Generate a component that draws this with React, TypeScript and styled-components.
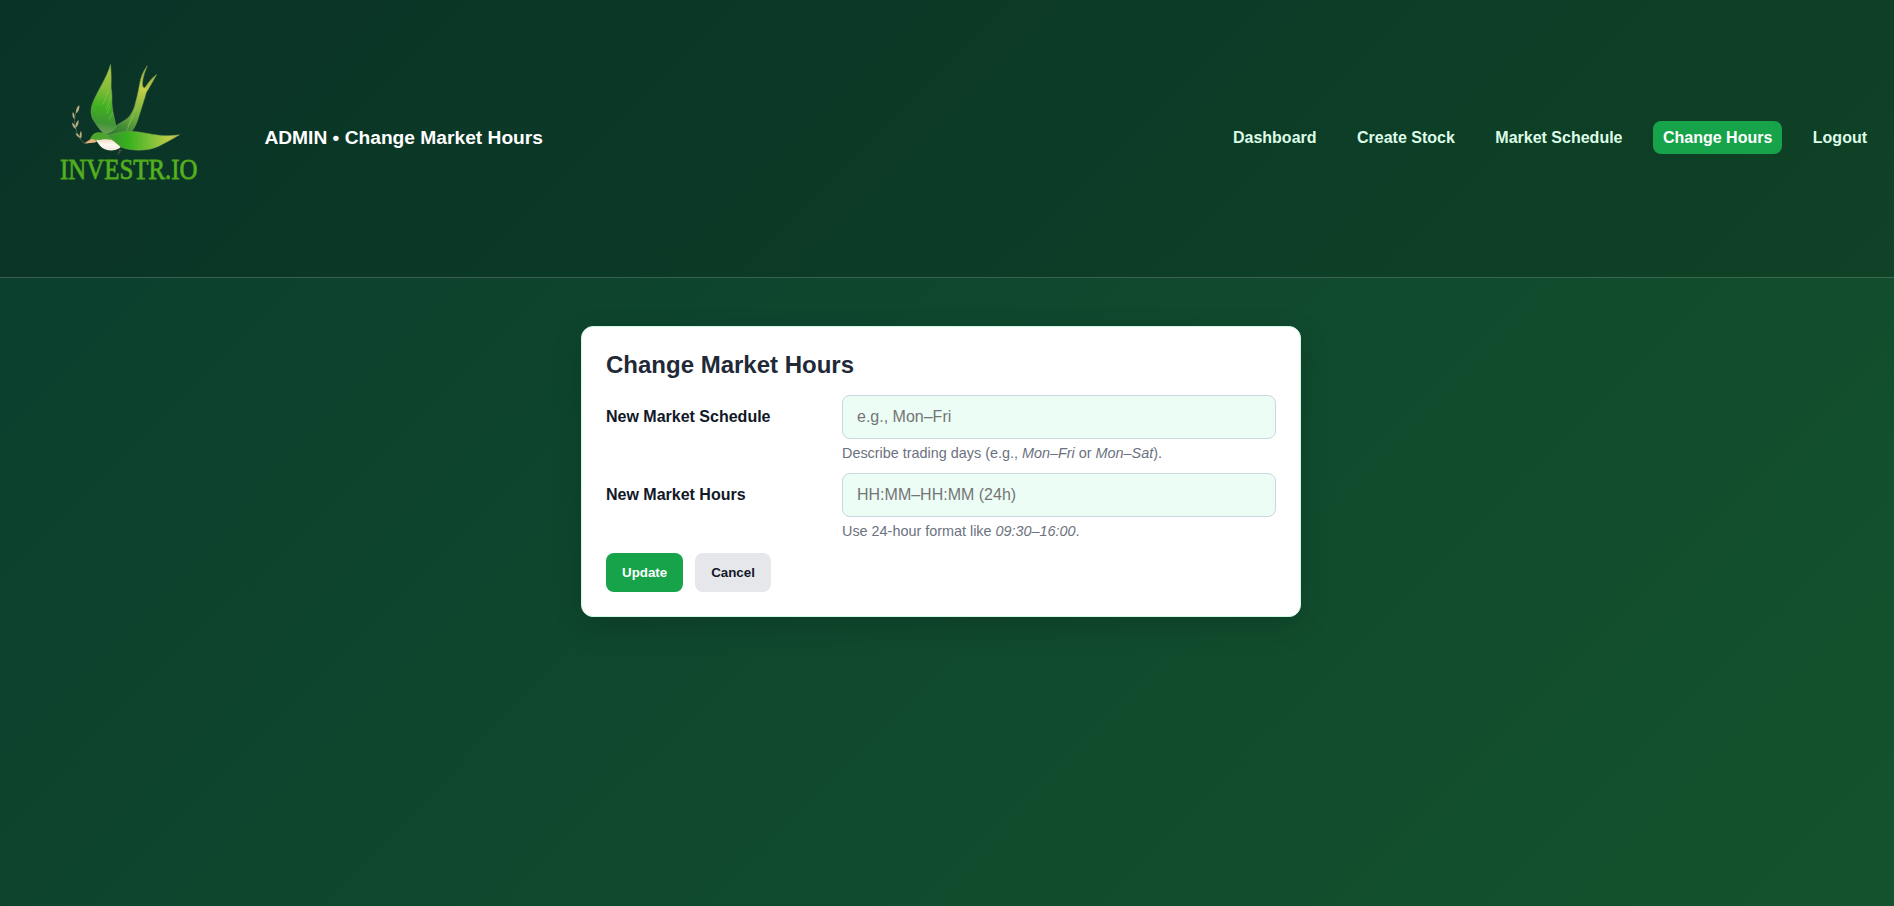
import React from "react";
import styled, { createGlobalStyle, css } from "styled-components";

const GlobalStyle = createGlobalStyle`
  * { box-sizing: border-box; }
  body {
    margin: 0;
    min-height: 100vh;
    font-family: Arial, "Liberation Sans", sans-serif;
    color: #111827;
    background: linear-gradient(135deg, #0b3d2e, #14532d);
  }
`;

const Header = styled.header`
  display: flex;
  align-items: center;
  height: 278px;
  padding: 0 17.4px 2px 0;
  background: rgba(0, 0, 0, 0.15);
  border-bottom: 1px solid rgba(255, 255, 255, 0.2);
`;

const Logo = styled.svg`
  flex: none;
  width: 250px;
  height: 250px;
  margin-right: 14.4px;
`;

const PageName = styled.div`
  color: #fff;
  font-size: 19.2px;
  font-weight: 700;
`;

const Nav = styled.nav`
  display: flex;
  gap: 21.3px;
  margin-left: auto;
`;

const NavLink = styled.a<{ $active?: boolean }>`
  padding: 8px 9.6px 7px;
  border-radius: 8px;
  color: #dcfce7;
  font-size: 16px;
  line-height: 18px;
  font-weight: 700;
  text-decoration: none;
  ${(p) => p.$active && css`
    background: #16a34a;
    color: #fff;
  `}
`;

const Main = styled.main`
  display: flex;
  justify-content: center;
  padding: 48px 12px 0 0;
`;

const Card = styled.form`
  width: 720px;
  padding: 24px;
  background: #fff;
  border: 1px solid #d1fae5;
  border-radius: 12px;
  box-shadow: 0 10px 30px rgba(0, 0, 0, 0.15);
`;

const Title = styled.h2`
  margin: 0 0 16px;
  color: #1f2937;
  font-size: 24px;
  line-height: 28px;
`;

const Row = styled.div`
  display: grid;
  grid-template-columns: 220px 1fr;
  gap: 16px;
  margin-bottom: 12px;
`;

const Label = styled.label`
  padding-top: 13px;
  font-size: 16px;
  line-height: 18px;
  font-weight: 700;
`;

const Input = styled.input`
  display: block;
  width: 100%;
  height: 44px;
  padding: 12px 14px;
  border: 1px solid #cbd5e1;
  border-radius: 8px;
  background: #ecfdf5;
  font: 16px Arial, "Liberation Sans", sans-serif;
`;

const Hint = styled.div`
  margin-top: 6px;
  color: #6b7280;
  font-size: 14.4px;
  line-height: 16px;
`;

const Actions = styled.div`
  display: flex;
  gap: 12px;
  padding-top: 2px;
`;

const Button = styled.button<{ $primary?: boolean }>`
  padding: 12px 16px;
  border: 0;
  border-radius: 8px;
  background: ${(p) => (p.$primary ? "#16a34a" : "#e5e7eb")};
  color: ${(p) => (p.$primary ? "#fff" : "#111827")};
  font: 700 13.333px Arial, "Liberation Sans", sans-serif;
`;

const Wordmark = styled.text`
  font-family: "Liberation Serif", serif;
  font-size: 29.5px;
  fill: #58b522;
  stroke: #4da41d;
  stroke-width: 0.9px;
`;

const links = ["Dashboard", "Create Stock", "Market Schedule", "Change Hours", "Logout"];

function BrandLogo() {
  return (
    <Logo viewBox="0 12.5 250 250" role="img" aria-label="Investr.io">
      <defs>
        <linearGradient id="wing" gradientUnits="userSpaceOnUse" x1="111" y1="64" x2="102" y2="133">
          <stop offset="0" stopColor="#b9c93c" />
          <stop offset="0.35" stopColor="#84bd38" />
          <stop offset="0.62" stopColor="#3fb021" />
          <stop offset="0.85" stopColor="#3f9433" />
          <stop offset="1" stopColor="#6fa15a" />
        </linearGradient>
        <linearGradient id="tail" gradientUnits="userSpaceOnUse" x1="150" y1="66" x2="112" y2="135">
          <stop offset="0" stopColor="#8fae2c" />
          <stop offset="0.3" stopColor="#c3cd48" />
          <stop offset="0.6" stopColor="#79b53b" />
          <stop offset="0.85" stopColor="#3f8b35" />
          <stop offset="1" stopColor="#2f7c31" />
        </linearGradient>
        <linearGradient id="rightWing" x1="0" y1="0" x2="1" y2="0">
          <stop offset="0" stopColor="#3d9034" />
          <stop offset="0.28" stopColor="#35b01c" />
          <stop offset="0.6" stopColor="#7cc038" />
          <stop offset="0.85" stopColor="#bccb46" />
          <stop offset="1" stopColor="#c9b548" />
        </linearGradient>
        <linearGradient id="belly" x1="0" y1="0" x2="0" y2="1">
          <stop offset="0" stopColor="#f1dcc6" />
          <stop offset="0.5" stopColor="#fffaf2" />
          <stop offset="1" stopColor="#f4e6dc" />
        </linearGradient>
      </defs>

      <path d="M147.300 65.300C143 71 140.500 77 139.500 84C138 93 136 100 134.500 106C132.500 112 130 115.500 127 118.300C120 123 111 128 103 134L108 141L130 138L131.700 131C135 127 137.500 121 139.500 114C141.500 108 143.500 101 145.500 95C146 92 147 90.500 148.500 88.500C151 84 154 79 156.700 74C152 77 149 81.500 145.500 86.500C143.500 88.500 142.200 86 142.500 82C143 76 145.500 70 147.300 65.300Z" fill="url(#tail)" stroke="#7c9b58" strokeWidth="0.5" />
      <path d="M110.500 64C107 77 97 91 92.500 103C90.500 109 90.500 114 93 119C97 125 100 130 104.500 133.500C109 132.500 113.500 130.500 116 127C115.500 121 113 114 112.300 107C111.500 101 112.500 96 111.500 90C110.500 86 112 80 110.500 64Z" fill="url(#wing)" stroke="#77a95c" strokeWidth="0.5" />
      <g fill="none" stroke="#bdd783" strokeWidth="0.5" opacity="0.65">
        <path d="M108 91L103 104M111 96L106 109M110 105L107 113M113 112L109 119" />
        <path d="M137 106L131 119M134 115L128 126M131 119L127 130" />
      </g>
      <path d="M90 140C91 134 95 131.500 100 131.800C103 132 106 133.500 109 134.500C114 137 119 142 121 147C113 144 106 140.500 98 141.500Z" fill="#4da52f" />
      <path d="M96.500 140.500C101 138.500 107 138 112 139.500C116 141 119 144 120.500 147C116 150.500 110 150.700 105.500 149C101 147.500 99 144 96.500 140.500Z" fill="url(#belly)" />
      <path d="M107 135C111 134 115 133.500 119 132.500C124 130.800 130 130.600 136 131.200C148 132.500 157 135.500 168 135.200C173 135 177 134.700 179.500 134.200C174 137.500 169 140.500 163 143.500C157 147 150 149.300 143 149.600C136 150 128 149.300 122 147C117 144 113 139.500 107 135Z" fill="url(#rightWing)" stroke="#7da756" strokeWidth="0.5" />
      <path d="M91 138.500C89 139.500 86.500 141.500 84.300 143C88.500 142.300 92.500 142.800 96.500 141.500C96 139.500 94 138.300 91 138.500Z" fill="#e8b27c" />
      <path d="M96 139.600C97 138.900 98.500 139 99.500 139.800C98.500 141 97 140.800 96 139.600Z" fill="#f4ecd9" />
      <path d="M119.500 149L119.800 152C117.500 152 117.800 154 119 154M119.800 149.500L122 150.500" fill="none" stroke="#6f6a50" strokeWidth="0.7" />
      <path d="M88 143L84 142.500C80 139.500 77 134 75.500 127C74 121 74 115 78.300 105.500" fill="none" stroke="#766f50" strokeWidth="0.7" />
      <g fill="#b6ad83">
        <path d="M79.300 104.500C76.500 107 75.500 110 76.300 113C78.800 111 79.800 108 79.300 104.500Z" />
        <path d="M72.800 111.500C72 114.500 72.500 117 74.300 118.500C75 115.500 74.500 113 72.800 111.500Z" />
        <path d="M78.500 119.500C76 121.500 75 124.500 75.600 127.500C78 125.500 79 122.500 78.500 119.500Z" />
        <path d="M72 122C72 125 73.500 127.300 75.800 128.500C75.500 125.500 74.200 123.300 72 122Z" />
        <path d="M80.800 130.500C79.300 133 79.500 136 80.800 138.500C82 136 82.200 133 80.800 130.500Z" />
        <path d="M75.500 132.500C76 135 78 137 80.500 137.500C79.800 135 78 133 75.500 132.500Z" />
      </g>
      <Wordmark x="60" y="178.500" textLength="137.500" lengthAdjust="spacingAndGlyphs">INVESTR.IO</Wordmark>
    </Logo>
  );
}

export default function App() {
  return (
    <>
      <GlobalStyle />
      <Header>
        <BrandLogo />
        <PageName>ADMIN • Change Market Hours</PageName>
        <Nav>
          {links.map((l) => (
            <NavLink key={l} $active={l === "Change Hours"}>{l}</NavLink>
          ))}
        </Nav>
      </Header>
      <Main>
        <Card>
          <Title>Change Market Hours</Title>
          <Row>
            <Label htmlFor="schedule">New Market Schedule</Label>
            <div>
              <Input id="schedule" placeholder="e.g., Mon–Fri" />
              <Hint>Describe trading days (e.g., <em>Mon–Fri</em> or <em>Mon–Sat</em>).</Hint>
            </div>
          </Row>
          <Row>
            <Label htmlFor="hours">New Market Hours</Label>
            <div>
              <Input id="hours" placeholder="HH:MM–HH:MM (24h)" />
              <Hint>Use 24-hour format like <em>09:30–16:00</em>.</Hint>
            </div>
          </Row>
          <Actions>
            <Button type="button" $primary>Update</Button>
            <Button type="button">Cancel</Button>
          </Actions>
        </Card>
      </Main>
    </>
  );
}
